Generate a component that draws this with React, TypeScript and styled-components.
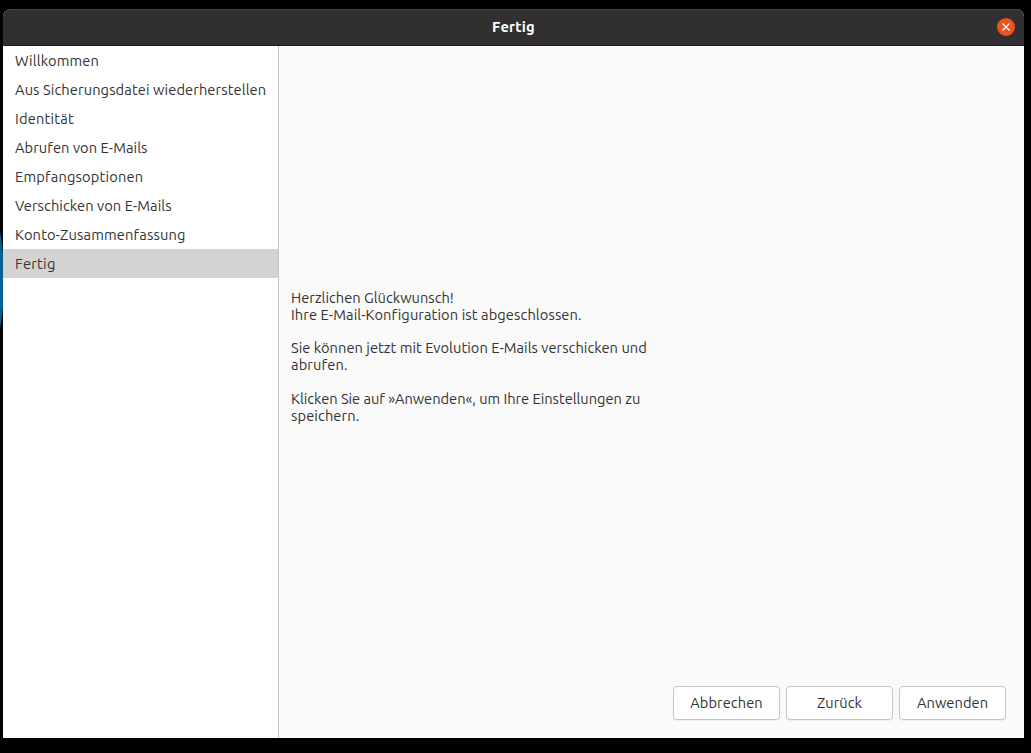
import React from "react";
import styled, { createGlobalStyle } from "styled-components";

const GlobalStyle = createGlobalStyle`
  * { box-sizing: border-box; }
  body {
    margin: 0;
    background: #000;
    color: #333;
    font-family: Ubuntu, "Noto Sans", sans-serif;
    font-size: 14.667px;
    font-variant-ligatures: none;
    overflow: hidden;
  }
`;

const Desktop = styled.main`
  position: relative;
  height: 753px;
  padding: 9px 7px 15px 3px;
  background: #000;
`;

const DesktopGlow = styled.div`
  position: absolute;
  left: -16px;
  top: 220px;
  width: 20px;
  height: 120px;
  border-radius: 50%;
  background: #04638d;
`;

const Window = styled.section`
  position: relative;
  display: flex;
  flex-direction: column;
  height: 729px;
  border-radius: 8px 8px 0 0;
  overflow: hidden;
  background: #fafafa;
`;

const TitleBar = styled.header`
  display: grid;
  grid-template-columns: 1fr auto 1fr;
  align-items: center;
  flex: none;
  height: 37px;
  padding: 0 9px 1px;
  background: #322f30;
  border-top: 1px solid #474445;
  border-bottom: 1px solid #1d1b1c;
`;

const Title = styled.h1`
  grid-column: 2;
  margin: 0;
  font-size: 14.667px;
  font-weight: 700;
  line-height: 20px;
  letter-spacing: 0.2px;
  color: #fff;
`;

const CloseButton = styled.button`
  justify-self: end;
  display: flex;
  align-items: center;
  justify-content: center;
  width: 18px;
  height: 18px;
  padding: 0;
  border: 0;
  border-radius: 50%;
  background: #e95420;
`;

const Body = styled.div`
  display: flex;
  flex: 1;
  min-height: 0;
`;

const Sidebar = styled.ul`
  flex: none;
  width: 276px;
  margin: 0;
  padding: 0;
  list-style: none;
  background: #fff;
  border-right: 1px solid #c4c4c4;
`;

const Step = styled.li<{ $active: boolean; $track: number }>`
  height: 29px;
  padding: 1px 0 0 12px;
  line-height: 28px;
  white-space: nowrap;
  letter-spacing: ${(p) => p.$track}px;
  background: ${(p) => (p.$active ? "#d3d3d3" : "transparent")};
`;

const Page = styled.div`
  display: flex;
  flex-direction: column;
  flex: 1;
  padding: 0 18px 18px 12px;
`;

const Message = styled.div`
  flex: 1;
  padding-top: 244px;
`;

const Paragraph = styled.p`
  margin: 0 0 16.8px;
  line-height: 16.85px;
`;

const Line = styled.span<{ $track: number }>`
  display: block;
  white-space: nowrap;
  letter-spacing: ${(p) => p.$track}px;
`;

const Actions = styled.footer`
  display: flex;
  justify-content: flex-end;
  gap: 6px;
`;

const Button = styled.button`
  width: 107px;
  height: 34px;
  padding: 0 0 2px;
  border: 1px solid #c6c6c6;
  border-radius: 4px;
  background: #fff;
  box-shadow: 0 1px 1px rgba(0, 0, 0, 0.06);
  color: inherit;
  font: inherit;
  letter-spacing: 0.06px;
`;

const steps = [
  { label: "Willkommen", track: 0.16 },
  { label: "Aus Sicherungsdatei wiederherstellen", track: 0.1 },
  { label: "Identität", track: 0.2 },
  { label: "Abrufen von E-Mails", track: 0.06 },
  { label: "Empfangsoptionen", track: 0.17 },
  { label: "Verschicken von E-Mails", track: 0.06 },
  { label: "Konto-Zusammenfassung", track: 0.15 },
  { label: "Fertig", track: 0.25 },
];

const message = [
  [
    { text: "Herzlichen Glückwunsch!", track: 0 },
    { text: "Ihre E-Mail-Konfiguration ist abgeschlossen.", track: 0.09 },
  ],
  [
    { text: "Sie können jetzt mit Evolution E-Mails verschicken und", track: 0.035 },
    { text: "abrufen.", track: 0.12 },
  ],
  [
    { text: "Klicken Sie auf »Anwenden«, um Ihre Einstellungen zu", track: -0.025 },
    { text: "speichern.", track: 0.1 },
  ],
];

const actions = ["Abbrechen", "Zurück", "Anwenden"];

export default function App() {
  return (
    <Desktop>
      <GlobalStyle />
      <DesktopGlow />
      <Window>
        <TitleBar>
          <Title>Fertig</Title>
          <CloseButton aria-label="Schließen">
            <svg width="8" height="8" viewBox="0 0 8 8" stroke="#fff" strokeWidth="1.3">
              <path d="M0.5 0.5 7.5 7.5M7.5 0.5 0.5 7.5" />
            </svg>
          </CloseButton>
        </TitleBar>
        <Body>
          <Sidebar>
            {steps.map((s, i) => (
              <Step key={s.label} $active={i === steps.length - 1} $track={s.track}>
                {s.label}
              </Step>
            ))}
          </Sidebar>
          <Page>
            <Message>
              {message.map((lines, i) => (
                <Paragraph key={i}>
                  {lines.map((l) => (
                    <Line key={l.text} $track={l.track}>{l.text}</Line>
                  ))}
                </Paragraph>
              ))}
            </Message>
            <Actions>
              {actions.map((label) => (
                <Button key={label}>{label}</Button>
              ))}
            </Actions>
          </Page>
        </Body>
      </Window>
    </Desktop>
  );
}
